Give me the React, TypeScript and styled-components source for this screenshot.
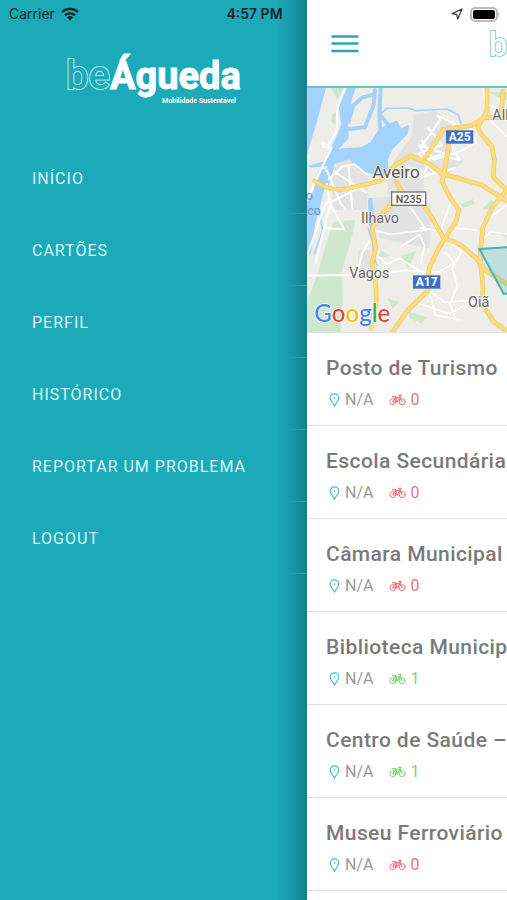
import React from 'react';
import styled, { createGlobalStyle } from 'styled-components';

const TEAL = '#1ca9b8';

const GlobalStyle = createGlobalStyle`
  *, *::before, *::after { box-sizing: border-box; }
  body { margin: 0; background: ${TEAL}; font-family: Roboto, sans-serif; }
`;

const Page = styled.div`
  position: relative;
  display: flex;
  min-height: 100vh;
  overflow: hidden;
`;

const StatusBar = styled.div`
  position: absolute;
  z-index: 2;
  top: 0;
  left: 0;
  right: 0;
  display: grid;
  grid-template-columns: 1fr auto 1fr;
  align-items: center;
  height: 27px;
  padding: 0 7px 0 9px;
  font-family: Inter, sans-serif;
  font-size: 14px;
  color: #10262a;
`;

const StatusGroup = styled.div<{ $end?: boolean }>`
  display: flex;
  align-items: center;
  justify-content: ${p => (p.$end ? 'flex-end' : 'flex-start')};
  gap: 6px;
`;

const Clock = styled.time`
  font-weight: 600;
`;

const Drawer = styled.nav`
  flex: 0 0 307px;
  padding-top: 46px;
  background: linear-gradient(to right, transparent, rgba(14, 70, 78, 0.14) 40%, rgba(14, 70, 78, 0.42)) right / 30px 100% no-repeat ${TEAL};
`;

const DrawerLogo = styled.div`
  display: flex;
  justify-content: center;
  height: 96px;
`;

const Menu = styled.ul`
  margin: 0;
  padding: 0;
  list-style: none;
`;

const MenuItem = styled.li`
  height: 72px;
  background: linear-gradient(to right, transparent, #1fb0ae) right bottom / 24px 1px no-repeat;
`;

const MenuLink = styled.a`
  display: flex;
  align-items: center;
  height: 100%;
  padding-left: 32px;
  color: #d9f8fa;
  font-size: 16px;
  letter-spacing: 1px;
  text-decoration: none;
  text-transform: uppercase;
`;

const Main = styled.main`
  flex: 1;
  min-width: 0;
  overflow: hidden;
  background: #fff;
`;

const Header = styled.header`
  position: relative;
  display: flex;
  align-items: center;
  justify-content: center;
  width: 100vw;
  height: 88px;
  padding-top: 4px;
  border-bottom: 2px solid #6cc4cb;
`;

const MenuButton = styled.button`
  position: absolute;
  left: 24px;
  top: 34px;
  width: 28px;
  height: 20px;
  padding: 0;
  border: 0;
  background: none;
  svg { display: block; }
`;

const MapView = styled.section`
  height: 245px;
  border-bottom: 1px solid #e0e0e0;
  svg { display: block; width: 100%; height: 100%; }
`;

const Stations = styled.ul`
  margin: 0;
  padding: 0;
  list-style: none;
`;

const Station = styled.li`
  height: 93px;
  padding: 21px 0 0 19px;
  border-bottom: 1px solid #dedfe0;
  white-space: nowrap;
`;

const StationName = styled.h2`
  margin: 0;
  font-size: 21px;
  line-height: 28px;
  font-weight: 500;
  letter-spacing: 0.02em;
  color: #7a7a7a;
`;

const StationInfo = styled.div`
  display: flex;
  align-items: center;
  gap: 16px;
  height: 20px;
  margin-top: 8px;
  padding-left: 3px;
  font-size: 16px;
  line-height: 20px;
  color: #9a9a9a;
`;

const Metric = styled.span<{ $color?: string; $gap: number }>`
  display: flex;
  align-items: center;
  gap: ${p => p.$gap}px;
  color: ${p => p.$color ?? 'inherit'};
`;

interface LogoProps {
  width: number;
  height: number;
  color: string;
  outline: string;
  background: string;
}

function Logo({ width, height, color, outline, background }: LogoProps) {
  return (
    <svg width={width} height={height} viewBox="0 0 175 60" overflow="visible" role="img" aria-label="beÁgueda Mobilidade Sustentável">
      <g fontFamily="Roboto, sans-serif" fontWeight="700">
        <text x="0" y="43" fontSize="40" fontWeight="500" fill={background} stroke={outline} strokeWidth="2" paintOrder="stroke">be</text>
        <text x="44" y="43" fontSize="38" fill={color} stroke={color} strokeWidth="1">Águeda</text>
        <text x="96" y="57" fontSize="7" fill={color}>Mobilidade Sustentável</text>
      </g>
    </svg>
  );
}

function PinIcon() {
  return (
    <svg width="11" height="14" viewBox="0 0 33 42" fill="none" stroke="#45b9c6" strokeWidth="3.4" aria-hidden="true">
      <path d="M16.500 39C13 31 3.500 23.500 3.500 15a13 12.500 0 0 1 26 0c0 8.500-9.500 16-13 24Z" />
      <circle cx="16.500" cy="15" r="2.600" fill="#45b9c6" stroke="none" />
    </svg>
  );
}

function BikeIcon() {
  return (
    <svg width="17" height="12" viewBox="0 0 51 36" fill="none" stroke="currentColor" strokeLinecap="round" strokeLinejoin="round" aria-hidden="true">
      <circle cx="11.500" cy="23" r="9" strokeWidth="3" />
      <circle cx="39.500" cy="23" r="9" strokeWidth="3" />
      <path d="M11.500 23 19 12l13-2M20 13l5 11 8-14 6.500 13M25 24H12" strokeWidth="3.400" />
      <path d="M11 8h9l3 4M29 4h7l-4 7" strokeWidth="4" />
    </svg>
  );
}

function RegionMap() {
  return (
    <svg viewBox="21 9 600 732" preserveAspectRatio="xMinYMin slice" role="img" aria-label="Aveiro">
      <rect x="21" y="9" width="1800" height="740" fill="#efede8" />
      {/* parkland */}
      <g fill="#cfe8cd">
        <path d="M94 9h45l-27 36zM96 90l14-12-3 43-14-12zM100 410l66-6-13 65-28 90 4 83-8 99H21v-90l30-80 32-110z" />
        <path d="M245 496l28 18-38 2zM303 512l46-14-24 53zM326 680l58 17-20 18-36-16zM263 640l34 10-19 23zM484 357l34-15 8 14-40 14zM545 374l30-30 10 26zM600 446l21 4v9zM558 20l63 2v24z" />
      </g>
      {/* built-up areas */}
      <g fill="#e2e2e3">
        <path d="M340 90l64-12 62 40-12 92 36 20-60 46-88-30-66-10 62-85zM96 248l54-35 54 61-4 101H97zM212 340l116-10 66 28-6 132-66-12-84-20-20-52zM174 494l37 2v78l-36-3zM263 280h108v50H263z" />
      </g>
      {/* sea and lagoon */}
      <g fill="#a3d2fb">
        <path d="M21 9h57L48 120 21 207z" />
        <path d="M239 130l52-24 12 24 24-10-4 26-46 48-14 31 4 37-34 12-56-20-40-44 34-16 40-22z" />
        <path d="M125 190l70-4-4 40-50-26-34 8z" />
        <path d="M21 242l54-13 16-38 25-50 8-24-8-50 26-62 26 2-12 34-12 78 2 40-30 34 60 4 16 20-50-10 6 16-44 14-18 68-14-4 9-58-46 5z" />
        <path d="M56 256l18-3 8 21-22 93-15 52-12 86-12 8V345l20-29zM204 340l13-1 6 68-11 23-6-10z" />
      </g>
      <g fill="none" stroke="#a3d2fb" strokeLinecap="round" strokeLinejoin="round">
        <path d="M239 88l22-18 62-1 26 8 92-5 34 17 7 26M205 430l13 44 4 42 8 25M58 376l10 60-25 70" strokeWidth="5" />
        <path d="M225 15l-4 44-26 68-60 6M150 70l36-32 35-10M146 110l14-50M242 9l-4 80 2 40M240 90l26 30" strokeWidth="12" />
      </g>
      {/* minor roads */}
      <g fill="none" stroke="#fff" strokeLinejoin="round">
        <path d="M135 9c-40 85-15 88-27 132L85 181l-18-8 3 13 25 3-30 60-44 98M80 295l13 79M84 285l42-40 38-7 38 32M80 255l43 102 15 18M145 238l12 135M100 258l100 65M94 350l98-48" strokeWidth="6" />
        <path d="M412 91l52 26-16 54 30 54-62-14-32 12-24-38 19-20 42-61zM355 180l93 30M384 128l42 52-70 25 48 60M365 165l36 59 86-28 34-20M390 222l-20 52 98-25M21 510c28-65 43-137 64-165l48 88-61-4M21 572l150-3 15-64 24-40M88 365l-42 172" strokeWidth="6" />
        <path d="M330 365l49 70-108 13-48-12M300 486l59-37 15 34-12 53M223 570l88-14 104 6 48-28-28-33M224 504l37 33 37-17 62 38M443 465l42 36-28 48 15 52-22 55 18 48M352 645l28-33 55 40 58-5 61 10M341 650l107 36 60-32M385 610l22 80 73 15M550 9l6 44 65 33M560 95l61 61M530 176l-20-46 35-29M568 55l-13 45M450 360l-30 78-62-10M530 435l-78-6M540 420l81-60M540 475l30-34 51 6" strokeWidth="5" />
      </g>
      {/* highways */}
      <g fill="none" stroke="#f0c766" strokeWidth="14" strokeLinejoin="round" strokeLinecap="round">
        <path d="M44 288q45 34 101 22l95-22 48-50 43-25 55 23 42 31 78 22 38 10 77 49" />
        <path d="M376 218l23-35 32-50 82-11 40-24 68-1M561 9v68l-28 51 12 21 31 35 7 40-3 52 41 41M446 180l-11 71-9 38 26 51 25 35-9 34-53 82-28 60-4 67-59 57-49 70M288 290l20 34-59 60-32 45 10 62-11 42 12 70 1 45-16 83M370 360l25 36 35 62 50 20 47 40 28 37 66 42M609 19l-6 80M621 315l-43 50-30 64-8 86 9 90-3 51 34 53 38 28" />
      </g>
      <g fill="none" stroke="#fddc7b" strokeWidth="10" strokeLinejoin="round" strokeLinecap="round">
        <path d="M44 288q45 34 101 22l95-22 48-50 43-25 55 23 42 31 78 22 38 10 77 49" />
        <path d="M376 218l23-35 32-50 82-11 40-24 68-1M561 9v68l-28 51 12 21 31 35 7 40-3 52 41 41M446 180l-11 71-9 38 26 51 25 35-9 34-53 82-28 60-4 67-59 57-49 70M288 290l20 34-59 60-32 45 10 62-11 42 12 70 1 45-16 83M370 360l25 36 35 62 50 20 47 40 28 37 66 42M609 19l-6 80M621 315l-43 50-30 64-8 86 9 90-3 51 34 53 38 28" />
      </g>
      <path d="M538 492l100-6v140h-27z" fill="#1ca9b8" fillOpacity="0.22" stroke="#43b4bd" strokeWidth="6" />
      {/* road shields */}
      <rect x="438" y="136" width="82" height="40" fill="#3c71c5" />
      <rect x="339" y="571" width="82" height="40" fill="#3c71c5" />
      <rect x="275" y="321" width="102" height="40" fill="#fff" stroke="#757575" strokeWidth="4" />
      <g fontFamily="Roboto, sans-serif" textAnchor="middle">
        <g fill="#fff" fontSize="36" fontWeight="700">
          <text x="479" y="169">A25</text>
          <text x="380" y="604">A17</text>
        </g>
        <text x="326" y="353" fill="#555" fontSize="32" fontWeight="500">N235</text>
        <g fill="#555" fontSize="51" stroke="#f7f6f3" strokeWidth="5" strokeLinejoin="round" paintOrder="stroke">
          <text x="288" y="280">Aveiro</text>
          <g fontSize="43" fill="#666">
            <text x="240" y="414">Ilhavo</text>
            <text x="208" y="580">Vagos</text>
            <text x="536" y="666">Oiã</text>
            <text x="577" y="106" textAnchor="start">Alb</text>
          </g>
        </g>
        <g fill="#6f91c9" fontSize="36">
          <text x="28" y="346">o</text>
          <text x="42" y="390">co</text>
        </g>
      </g>
      <text x="43" y="711" fontFamily="Lato, sans-serif" fontSize="72" fontWeight="500" stroke="#fff" strokeWidth="5" paintOrder="stroke">
        <tspan fill="#4285f4">G</tspan><tspan fill="#ea4335">o</tspan><tspan fill="#fbbc05">o</tspan><tspan fill="#4285f4">g</tspan><tspan fill="#34a853">l</tspan><tspan fill="#ea4335">e</tspan>
      </text>
    </svg>
  );
}

const menuItems = ['Início', 'Cartões', 'Perfil', 'Histórico', 'Reportar um problema', 'Logout'];

const stations = [
  { name: 'Posto de Turismo', bikes: 0 },
  { name: 'Escola Secundária', bikes: 0 },
  { name: 'Câmara Municipal', bikes: 0 },
  { name: 'Biblioteca Municipal', bikes: 1 },
  { name: 'Centro de Saúde –', bikes: 1 },
  { name: 'Museu Ferroviário', bikes: 0 },
];

export default function App() {
  return (
    <>
      <GlobalStyle />
      <Page>
        <StatusBar>
          <StatusGroup>
            <span>Carrier</span>
            <svg width="18" height="14" viewBox="0 0 54 42" aria-hidden="true">
              <g fill="none" stroke="#10262a" strokeWidth="7">
                <path d="M3 15a35 35 0 0 1 48 0" />
                <path d="M12 25a22 22 0 0 1 30 0" />
              </g>
              <path d="M18 31a13 13 0 0 1 18 0l-9 10z" fill="#10262a" />
            </svg>
          </StatusGroup>
          <Clock>4:57 PM</Clock>
          <StatusGroup $end>
            <svg width="12" height="12" viewBox="0 0 36 36" fill="none" stroke="#333" strokeWidth="3.500" strokeLinejoin="round" aria-hidden="true">
              <path d="M33 3 3 17l14 2 3 14z" />
            </svg>
            <svg width="31" height="16" viewBox="0 0 31 16" aria-hidden="true">
              <rect x="2" y="2" width="26" height="13" rx="4" fill="#fff" stroke="#bcbcbc" strokeWidth="2" />
              <rect x="4" y="4" width="22" height="9" rx="2" fill="#000" />
              <path d="M29.500 6q2 2.500 0 5z" fill="#aaa" />
            </svg>
          </StatusGroup>
        </StatusBar>

        <Drawer>
          <DrawerLogo>
            <Logo width={175} height={60} color="#fff" outline="#b4eef2" background={TEAL} />
          </DrawerLogo>
          <Menu>
            {menuItems.map(item => (
              <MenuItem key={item}>
                <MenuLink href="#">{item}</MenuLink>
              </MenuItem>
            ))}
          </Menu>
        </Drawer>

        <Main>
          <Header>
            <MenuButton aria-label="Menu">
              <svg width="28" height="20" viewBox="0 0 28 20" stroke="#2ba5b1" strokeWidth="2.400" strokeLinecap="round">
                <path d="M1.500 2.500h25M1.500 9.500h25M1.500 17h25" />
              </svg>
            </MenuButton>
            <Logo width={143} height={49} color={TEAL} outline="#5cc6cf" background="#fff" />
          </Header>
          <MapView>
            <RegionMap />
          </MapView>
          <Stations>
            {stations.map(s => (
              <Station key={s.name}>
                <StationName>{s.name}</StationName>
                <StationInfo>
                  <Metric $gap={5}>
                    <PinIcon />
                    N/A
                  </Metric>
                  <Metric $gap={4} $color={s.bikes > 0 ? '#7cd66f' : '#f0757b'}>
                    <BikeIcon />
                    {s.bikes}
                  </Metric>
                </StationInfo>
              </Station>
            ))}
          </Stations>
        </Main>
      </Page>
    </>
  );
}
